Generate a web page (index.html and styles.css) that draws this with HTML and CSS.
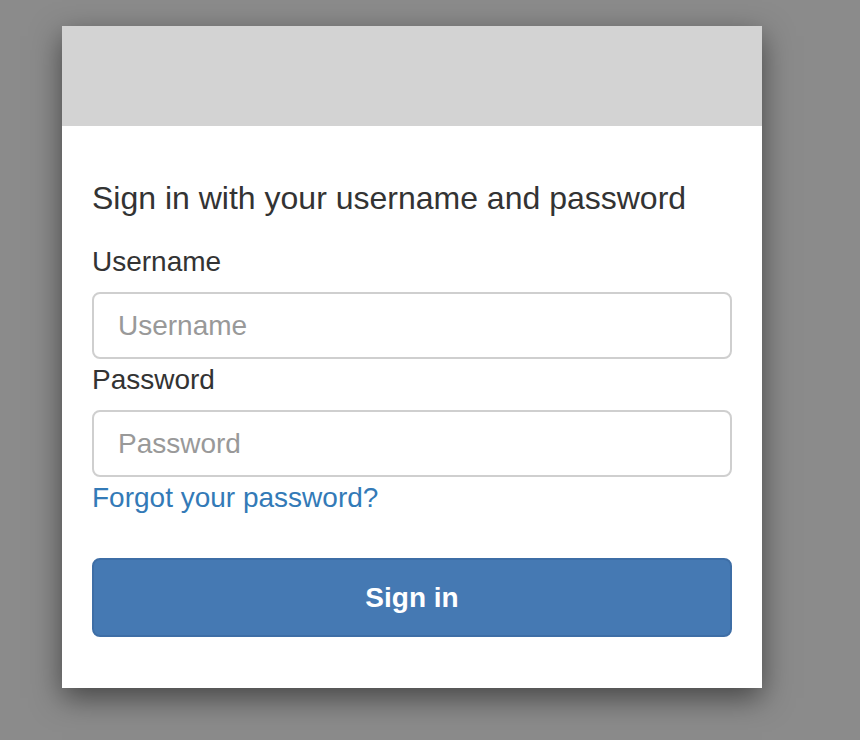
FILE: index.html
```html
<!DOCTYPE html>
<html lang="en">
<head>
<meta charset="utf-8">
<title>Sign in</title>
<link rel="stylesheet" href="styles.css">
</head>
<body>
<div class="modal">
  <div class="modal-header"></div>
  <div class="modal-body">
    <h2 class="title">Sign in with your username and password</h2>
    <form class="form">
      <label class="label" for="username">Username</label>
      <input class="input" id="username" type="text" placeholder="Username">
      <label class="label" for="password">Password</label>
      <input class="input" id="password" type="password" placeholder="Password">
      <a class="forgot" href="#">Forgot your password?</a>
      <button class="submit" type="button">Sign in</button>
    </form>
  </div>
</div>
</body>
</html>
```
FILE: styles.css
```css
html, body {
  margin: 0;
  padding: 0;
}
body {
  background: #8b8b8b;
  font-family: "Liberation Sans", Arial, Helvetica, sans-serif;
  color: #333;
  height: 740px;
  overflow: hidden;
}
.modal {
  margin: 26px 0 0 62px;
  width: 700px;
  background: #fff;
  box-shadow: 0 10px 28px rgba(0, 0, 0, 0.5);
}
.modal-header {
  height: 100px;
  background: #d3d3d3;
}
.modal-body {
  padding: 52px 30px 51px 30px;
}
.title {
  margin: 0;
  font-size: 32px;
  font-weight: normal;
  line-height: 40px;
  color: #333;
}
.form {
  display: flex;
  flex-direction: column;
  margin-top: 24px;
}
.label {
  font-size: 28px;
  line-height: 40px;
  color: #333;
}
.input {
  box-sizing: border-box;
  height: 67px;
  margin: 10px 0 1px 0;
  padding: 0 24px;
  border: 2px solid #cfcfcf;
  border-radius: 8px;
  font-family: inherit;
  font-size: 28px;
  color: #555;
  background: #fff;
  outline: none;
}
.input::placeholder {
  color: #999;
}
.forgot {
  align-self: flex-start;
  font-size: 28px;
  line-height: 40px;
  color: #337ab7;
  text-decoration: none;
}
.submit {
  margin-top: 40px;
  height: 79px;
  border: 2px solid #3e6ea6;
  border-radius: 8px;
  background: #4579b3;
  color: #fff;
  font-family: inherit;
  font-size: 28px;
  font-weight: bold;
  cursor: pointer;
}
```
